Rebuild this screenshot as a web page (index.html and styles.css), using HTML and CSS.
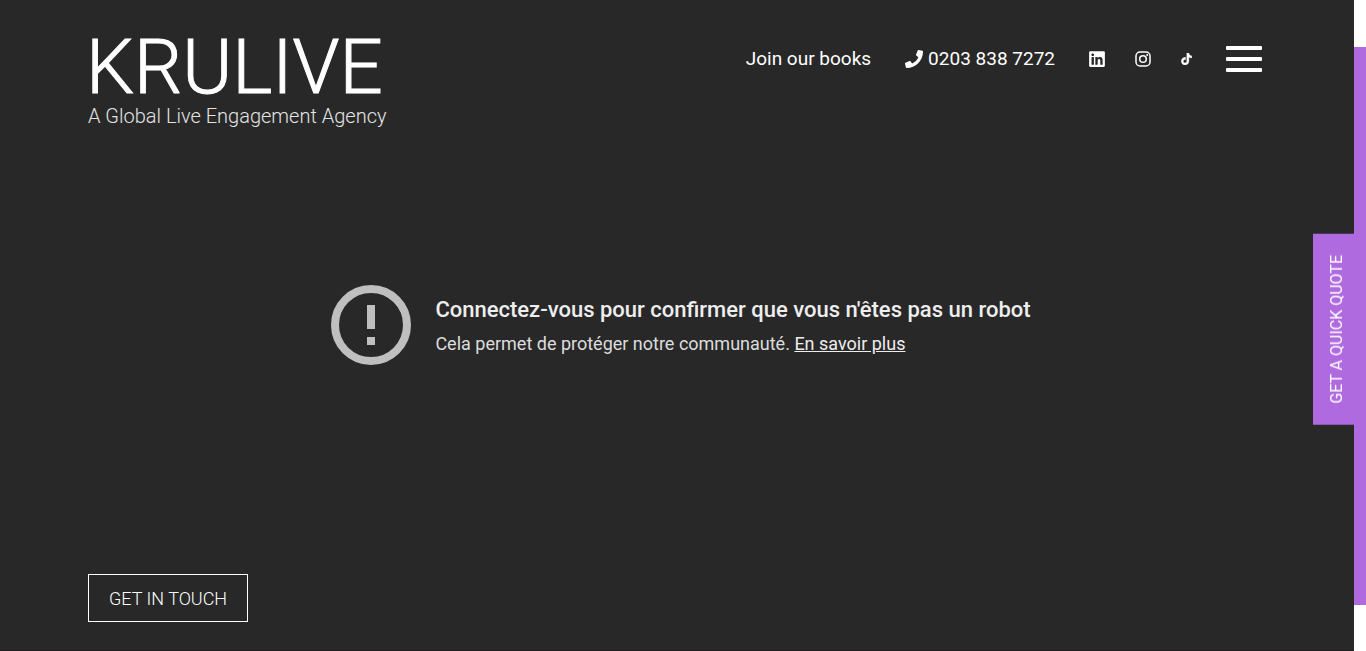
FILE: index.html
```html
<!DOCTYPE html>
<html lang="en">
<head>
    <meta charset="UTF-8">
    <meta name="viewport" content="width=device-width, initial-scale=1.0">
    <title>KRULIVE - A Global Live Engagement Agency</title>
    <link rel="stylesheet" href="styles.css">
</head>
<body>
    <div class="page">
        <header class="header">
            <a class="logo" href="/">
                <span class="logo-name">KRULIVE</span>
                <span class="logo-tagline">A Global Live Engagement Agency</span>
            </a>
            <nav class="nav">
                <a class="nav-link" href="/join">Join our books</a>
                <a class="nav-link phone" href="tel:02038387272">
                    <svg width="18" height="18" viewBox="0 0 512 512" fill="currentColor" aria-hidden="true"><path d="M493.4 24.6l-104-24c-11.3-2.6-22.9 3.3-27.5 13.9l-48 112c-4.2 9.8-1.4 21.3 6.9 28l60.6 49.6c-36 76.7-98.9 140.5-177.2 177.2l-49.6-60.6c-6.8-8.3-18.2-11.1-28-6.9l-112 48C3.9 366.5-2 378.1.6 389.4l24 104C27.1 504.2 36.7 512 48 512c256.1 0 464-207.5 464-464 0-11.2-7.7-20.9-18.6-23.4z"/></svg>
                    0203 838 7272
                </a>
                <div class="social">
                    <a href="#" aria-label="LinkedIn">
                        <svg width="16" height="18" viewBox="0 0 448 512" fill="currentColor"><path d="M416 32H31.9C14.3 32 0 46.5 0 64.3v383.4C0 465.5 14.3 480 31.9 480H416c17.6 0 32-14.5 32-32.3V64.3c0-17.8-14.4-32.3-32-32.3zM135.4 416H69V202.200h66.500V416zm-33.200-243c-21.300 0-38.500-17.300-38.500-38.500S80.900 96 102.200 96c21.200 0 38.500 17.300 38.500 38.500 0 21.300-17.200 38.500-38.500 38.500zm282.100 243h-66.400V312c0-24.800-.5-56.700-34.500-56.700-34.600 0-39.900 27-39.900 54.900V416h-66.400V202.200h63.700v29.200h.9c8.900-16.800 30.600-34.500 62.900-34.500 67.200 0 79.700 44.300 79.700 101.900V416z"/></svg>
                    </a>
                    <a href="#" aria-label="Instagram">
                        <svg width="16" height="18" viewBox="0 0 16 18" fill="none" stroke="currentColor"><rect x="1" y="2" width="14" height="14" rx="4" stroke-width="1.5"/><circle cx="8" cy="9" r="3.3" stroke-width="1.5"/><circle cx="12.2" cy="4.9" r="1" fill="currentColor" stroke="none"/></svg>
                    </a>
                    <a href="#" aria-label="TikTok">
                        <svg width="11" height="12" viewBox="0 0 448 512" fill="currentColor" stroke="currentColor" stroke-width="16"><path d="M448 209.900a210.100 210.100 0 0 1-122.800-39.300v178.800A162.600 162.600 0 1 1 185 188.300v89.900a74.600 74.600 0 1 0 52.200 71.200V0h88a121.200 121.200 0 0 0 1.900 22.200 122.200 122.200 0 0 0 53.900 80.200 121.400 121.400 0 0 0 67 20.100z"/></svg>
                    </a>
                </div>
                <button class="menu-button" type="button" aria-label="Menu">
                    <span></span>
                    <span></span>
                    <span></span>
                </button>
            </nav>
        </header>

        <main class="video-error" lang="fr">
            <svg width="80" height="80" viewBox="0 0 80 80" aria-hidden="true">
                <circle cx="40" cy="40" r="36" fill="none" stroke="#bfbfbf" stroke-width="8"/>
                <path d="M36 20h8v24h-8zM36 52h8v8h-8z" fill="#bfbfbf"/>
            </svg>
            <div class="video-error-text">
                <h1>Connectez-vous pour confirmer que vous n'êtes pas un robot</h1>
                <p>Cela permet de protéger notre communauté. <a href="#">En savoir plus</a></p>
            </div>
        </main>

        <footer class="footer">
            <a class="contact-button" href="/contact">GET IN TOUCH</a>
        </footer>
    </div>

    <aside class="quote-drawer">
        <button class="quote-tab" type="button">GET A QUICK QUOTE</button>
    </aside>
</body>
</html>
```
FILE: styles.css
```css
* {
    box-sizing: border-box;
}
body {
    margin: 0;
    background: #fff;
    color: #fff;
    font-family: Roboto, sans-serif;
}
a {
    color: inherit;
    text-decoration: none;
}
svg {
    display: block;
    flex-shrink: 0;
}
.page {
    display: flex;
    flex-direction: column;
    min-height: 100vh;
    margin-right: 12px;
    background: #282828;
    border-bottom: 1px solid #201b1d;
}

/* Header */
.header {
    display: flex;
    justify-content: space-between;
    align-items: flex-start;
    padding: 32px 92px 0 86px;
}
.logo {
    display: flex;
    flex-direction: column;
    font-weight: 300;
}
.logo-name {
    font-size: 76px;
    line-height: 70px;
    -webkit-text-stroke: 1px #fff;
}
.logo-tagline {
    padding-left: 2px;
    color: #e4e4e4;
    font-size: 20px;
    line-height: 28px;
}
.nav {
    display: flex;
    align-items: center;
    gap: 34px;
    padding-top: 14px;
    font-size: 19px;
    line-height: 26px;
}
.phone {
    display: flex;
    align-items: center;
    gap: 5px;
}
.social {
    display: flex;
    align-items: center;
    gap: 30px;
}
.menu-button {
    display: flex;
    flex-direction: column;
    justify-content: space-between;
    width: 36px;
    height: 26px;
    padding: 0;
    border: none;
    background: none;
    cursor: pointer;
}
.menu-button span {
    height: 4px;
    border-radius: 1px;
    background: #fff;
}

/* Video message */
.video-error {
    display: flex;
    flex: 1;
    align-items: center;
    justify-content: center;
    gap: 24px;
    padding: 0 24px 54px 32px;
}
.video-error-text h1 {
    margin: 0 0 7px;
    color: #eee;
    font-size: 22px;
    font-weight: 500;
    line-height: 30px;
}
.video-error-text p {
    margin: 0;
    color: #ddd;
    font-size: 18px;
    line-height: 24px;
}
.video-error-text a {
    color: #eee;
    text-decoration: underline;
}

.footer {
    padding: 0 88px 28px;
}
.contact-button {
    display: inline-block;
    padding: 12px 20px 10px;
    border: 1px solid #fff;
    font-size: 18px;
    font-weight: 300;
    line-height: 24px;
}

/* Quote drawer, only its edge and tab show while closed */
.quote-drawer {
    position: fixed;
    top: 47px;
    right: 0;
    bottom: 46px;
    display: flex;
    align-items: center;
    width: 12px;
    padding-top: 6px;
    background: #b06ae0;
}
.quote-tab {
    flex-shrink: 0;
    margin-left: -41px;
    padding: 21px 14px;
    border: none;
    background: #b06ae0;
    color: #fff;
    font-family: Roboto, sans-serif;
    font-size: 16px;
    line-height: 19px;
    writing-mode: vertical-rl;
    transform: rotate(180deg);
    cursor: pointer;
}
```
